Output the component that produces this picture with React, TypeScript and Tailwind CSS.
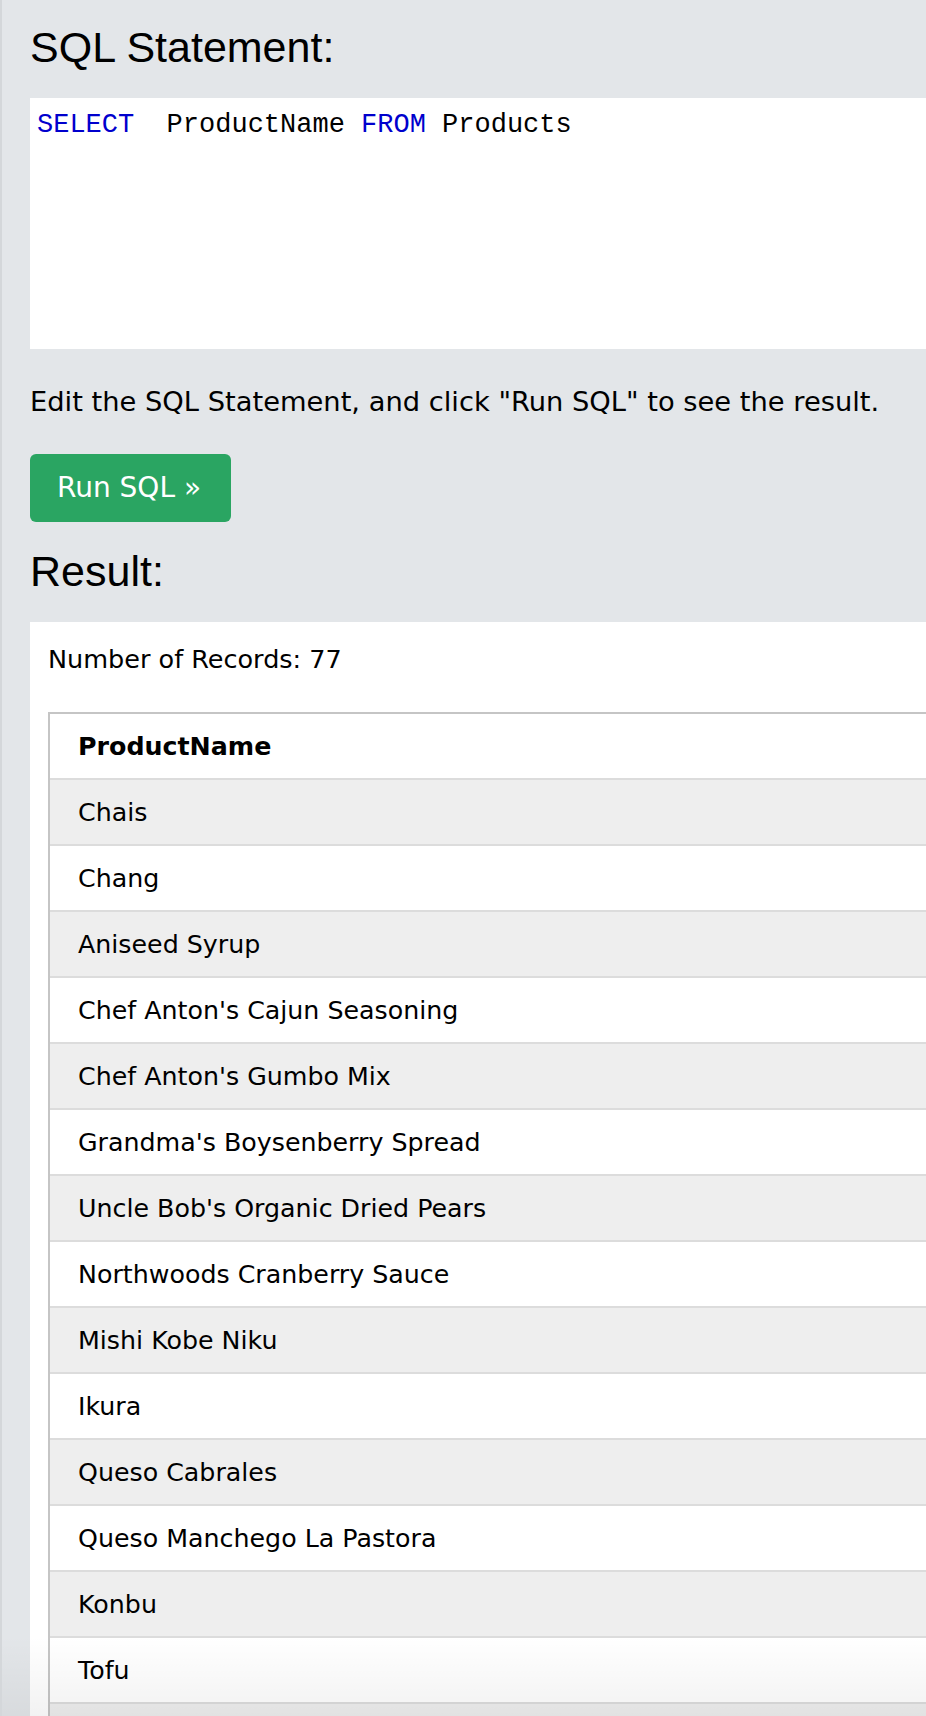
const products = [
  'Chais',
  'Chang',
  'Aniseed Syrup',
  "Chef Anton's Cajun Seasoning",
  "Chef Anton's Gumbo Mix",
  "Grandma's Boysenberry Spread",
  "Uncle Bob's Organic Dried Pears",
  'Northwoods Cranberry Sauce',
  'Mishi Kobe Niku',
  'Ikura',
  'Queso Cabrales',
  'Queso Manchego La Pastora',
  'Konbu',
  'Tofu',
  'Genen Shouyu',
  'Pavlova',
];

const sans = "font-['Liberation_Sans',Arial,sans-serif]";
const body = "font-['DejaVu_Sans',Verdana,sans-serif]";

export default function App() {
  return (
    <div className="relative h-[1716px] overflow-hidden bg-[#e3e6e9] border-l-2 border-[#d4d7da] pl-[28px]">
      <h2 className={`${sans} mt-[23px] text-[43px] leading-[48px] font-normal text-black`}>
        SQL Statement:
      </h2>

      <div className="mt-[27px] h-[251px] bg-white pl-[7px] pt-[11px]">
        <pre className="font-['Liberation_Mono','Courier_New',monospace] text-[27px] leading-[32px] text-black whitespace-pre">
          <span className="text-[#0000cd]">SELECT</span>
          {'  ProductName '}
          <span className="text-[#0000cd]">FROM</span>
          {' Products'}
        </pre>
      </div>

      <p className={`${body} mt-[35px] text-[27.3px] leading-[36px] text-black`}>
        Edit the SQL Statement, and click "Run SQL" to see the result.
      </p>

      <button
        className={`${body} mt-[34px] flex h-[68px] w-[201px] items-center rounded-[6px] bg-[#2aa562] pl-[27px] text-[28px] text-white`}
      >
        Run SQL »
      </button>

      <h2 className={`${sans} mt-[25px] text-[43px] leading-[48px] font-normal text-black`}>
        Result:
      </h2>

      <div className="mt-[27px] bg-white pl-[18px] pt-[19px]">
        <div className={`${body} text-[25.5px] leading-[36px] text-black`}>
          Number of Records: 77
        </div>

        <div className={`${body} mt-[35px] border-l-2 border-t-2 border-[#c5c5c5] text-[25.3px] text-black`}>
          <div className="flex h-[66px] items-center border-b-2 border-[#dcdcdc] bg-white pl-[28px] pt-[1px] font-bold">
            ProductName
          </div>
          {products.map((name, i) => (
            <div
              key={name}
              className={`flex h-[66px] items-center border-b-2 border-[#dcdcdc] pl-[28px] pt-[1px] ${
                i % 2 === 0 ? 'bg-[#eeeeee]' : 'bg-white'
              }`}
            >
              {name}
            </div>
          ))}
        </div>
      </div>

      <div className="pointer-events-none absolute bottom-0 left-0 right-0 h-[80px] bg-linear-to-b from-transparent to-black/5" />
    </div>
  );
}
